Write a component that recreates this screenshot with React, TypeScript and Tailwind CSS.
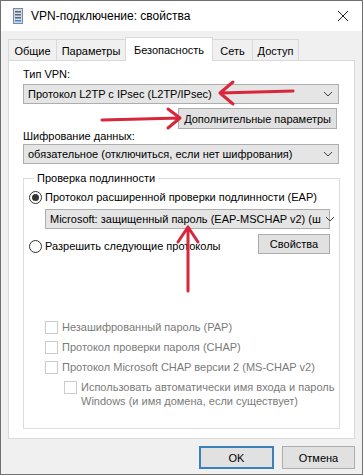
import { ReactNode } from "react";

function Chevron() {
  return (
    <svg width="10" height="6" viewBox="0 0 10 6" className="shrink-0">
      <polyline points="1,1 5,5 9,1" fill="none" stroke="#404040" strokeWidth="1" />
    </svg>
  );
}

function Combo({ children, className }: { children: ReactNode; className?: string }) {
  return (
    <div
      className={
        "flex h-[20px] min-w-0 items-center justify-between gap-[4px] border border-[#adadad] bg-[#e5e5e5] pl-[4px] pr-[5px] " +
        (className ?? "")
      }
    >
      <span className="whitespace-nowrap">{children}</span>
      <Chevron />
    </div>
  );
}

function Radio({ checked }: { checked?: boolean }) {
  return (
    <span className="flex h-[13px] w-[13px] shrink-0 items-center justify-center rounded-full border border-[#333] bg-white">
      {checked && <span className="h-[7px] w-[7px] rounded-full bg-[#333]" />}
    </span>
  );
}

function Check() {
  return <span className="block h-[13px] w-[13px] shrink-0 border border-[#cccccc] bg-white" />;
}

const protocols = [
  "Незашифрованный пароль (PAP)",
  "Протокол проверки пароля (CHAP)",
  "Протокол Microsoft CHAP версии 2 (MS-CHAP v2)",
];

const tabs = [
  { label: "Общие", w: "w-[49px]" },
  { label: "Параметры", w: "w-[70px]" },
  { label: "Безопасность", w: "w-[88px]" },
  { label: "Сеть", w: "w-[41px]" },
  { label: "Доступ", w: "w-[47px]" },
];

export default function App() {
  return (
    <div
      className="relative flex h-[475px] w-[363px] flex-col border border-[#707070] bg-[#f0f0f0] text-[11px] leading-[14px] text-black"
      style={{ fontFamily: '"Liberation Sans", Arial, sans-serif' }}
    >
      {/* title bar */}
      <div className="flex h-[30px] items-center bg-white pl-[12px] pr-[12px]">
        <svg width="10" height="16" viewBox="0 0 10 16" className="mr-[8px]">
          <rect x="0.5" y="0.5" width="9" height="15" fill="#cfd8e3" stroke="#7c8aa0" />
          <rect x="2" y="3" width="6" height="1.5" fill="#5b6b82" />
          <rect x="2" y="6" width="6" height="1.5" fill="#5b6b82" />
          <rect x="2" y="9" width="6" height="1.5" fill="#5b6b82" />
          <rect x="2" y="12" width="6" height="1.5" fill="#3d8be0" />
        </svg>
        <span className="text-[12px]">VPN-подключение: свойства</span>
        <svg width="12" height="12" viewBox="0 0 12 12" className="ml-auto mr-[1px]">
          <path d="M1 1 L11 11 M11 1 L1 11" stroke="#222" strokeWidth="1" />
        </svg>
      </div>

      {/* tabs */}
      <div className="mt-[6px] flex items-end pl-[7px]">
        {tabs.map((t) => {
          const active = t.label === "Безопасность";
          return (
            <div
              key={t.label}
              className={
                (active
                  ? "relative z-10 -mb-px h-[24px] bg-white pt-[5px]"
                  : "h-[21px] bg-[#f0f0f0] pt-[4px]") +
                " -ml-px border border-b-0 border-[#d9d9d9] text-center first:ml-0 " +
                t.w
              }
            >
              {t.label}
            </div>
          );
        })}
      </div>

      {/* tab panel */}
      <div className="mx-[7px] flex h-[379px] flex-col border border-[#d9d9d9] bg-white px-[14px] pt-[6px]">
        <div>Тип VPN:</div>
        <Combo className="mt-[3px] mr-[1px]">Протокол L2TP с IPsec (L2TP/IPsec)</Combo>
        <div className="mt-[4px] flex justify-end pr-[3px]">
          <div className="flex h-[21px] items-center border border-[#adadad] bg-[#e1e1e1] px-[5px]">
            Дополнительные параметры
          </div>
        </div>
        <div className="mt-[1px] leading-[13px]">Шифрование данных:</div>
        <Combo className="mt-[1px] mr-[1px]">обязательное (отключиться, если нет шифрования)</Combo>

        <fieldset className="mt-[7px] h-[258px] min-w-0 border border-[#dcdcdc] pl-[5px] pr-[11px]">
          <legend className="ml-[5px] px-[3px]">Проверка подлинности</legend>
          <div className="mt-[5px] flex items-center gap-[3px]">
            <Radio checked />
            <span>Протокол расширенной проверки подлинности (EAP)</span>
          </div>
          <Combo className="mt-[5px] ml-[16px] -mr-[2px]">Microsoft: защищенный пароль (EAP-MSCHAP v2) (ш</Combo>
          <div className="mt-[5px] -mr-[2px] flex items-start justify-between">
            <div className="mt-[5px] flex items-center gap-[3px]">
              <Radio />
              <span>Разрешить следующие протоколы</span>
            </div>
            <div className="flex h-[20px] w-[72px] items-center justify-center border border-[#adadad] bg-[#e1e1e1]">
              Свойства
            </div>
          </div>

          <div className="mt-[66px] flex flex-col gap-[6px] pl-[16px] text-[#7a7a7a]">
            {protocols.map((p) => (
              <div key={p} className="flex items-center gap-[4px]">
                <Check />
                <span className="whitespace-nowrap">{p}</span>
              </div>
            ))}
            <div className="flex items-start gap-[4px] pl-[19px]">
              <span className="mt-[1px] flex">
                <Check />
              </span>
              <span className="whitespace-nowrap leading-[14px]">
                Использовать автоматически имя входа и пароль
                <br />
                Windows (и имя домена, если существует)
              </span>
            </div>
          </div>
        </fieldset>
      </div>

      {/* bottom buttons */}
      <div className="mt-[7px] flex justify-end gap-[8px] pr-[7px]">
        <div className="flex h-[23px] w-[75px] items-center justify-center border-2 border-[#3a80bd] bg-[#e1e1e1]">
          OK
        </div>
        <div className="flex h-[23px] w-[73px] items-center justify-center border border-[#adadad] bg-[#e1e1e1]">
          Отмена
        </div>
      </div>

      {/* annotation arrows */}
      <svg className="pointer-events-none absolute left-0 top-0" width="363" height="475" viewBox="0 0 363 475">
        <g stroke="#d8263b" strokeWidth="3" fill="none" strokeLinecap="round" strokeLinejoin="round">
          <path d="M219 92 L292 90 M219 92 L232 81 M219 92 L232 103" />
          <path d="M101 119 L179 117 M179 117 L167 108 M179 117 L167 127" />
          <path d="M187 226 L187 290 M187 226 L177 241 M187 226 L197 241" />
        </g>
      </svg>
    </div>
  );
}
